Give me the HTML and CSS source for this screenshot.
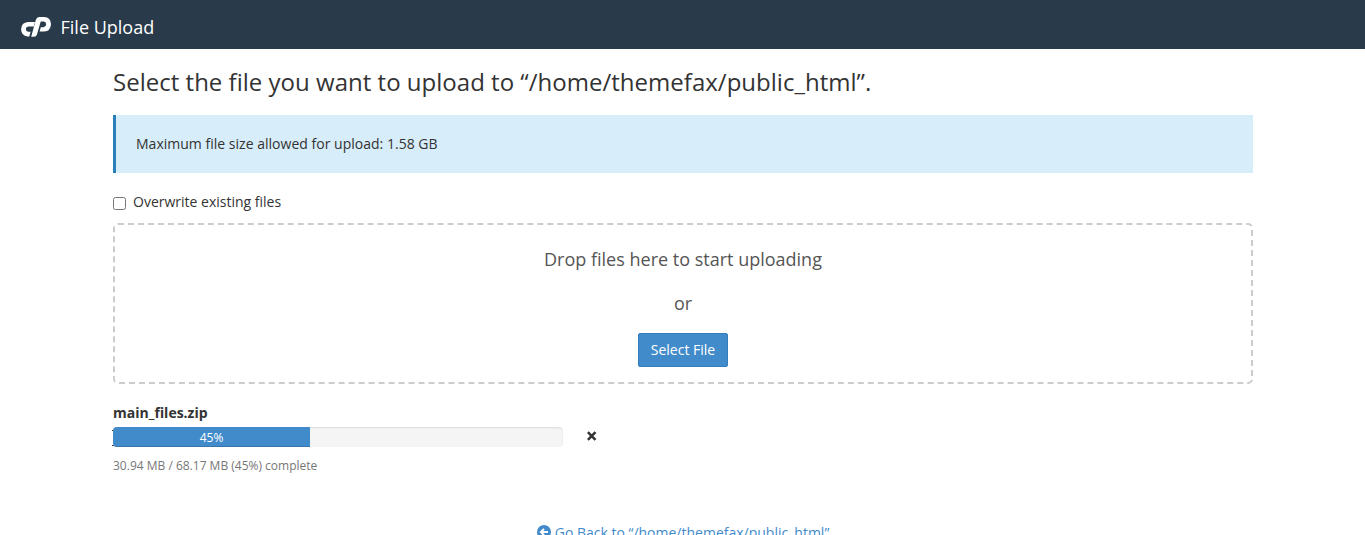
FILE: index.html
```
<!DOCTYPE html>
<html lang="en">
<head>
<meta charset="utf-8">
<title>File Upload</title>
<link rel="stylesheet" href="styles.css">
</head>
<body>
<header class="topbar">
  <svg class="logo" viewBox="0 0 30 20" width="30" height="20" aria-hidden="true">
    <path d="M7 5H14L12.8 9.4H7.4Q5 9.6 4.8 12Q5 14.6 7.2 14.8H9.6L8.3 19.5H6.6Q.3 19 .1 12.3Q.3 5.6 7 5Z"/>
    <path d="M14.8 3Q15.6 .2 18.4 0H23.2Q29.8.4 30 7.2Q29.6 14 23.2 14.6H18.6L19.8 10.2H22.6Q25 10 25.2 7.3Q25 4.7 22.7 4.5H19.7L16 17.4Q15.4 19.8 12.8 19.8H10.2Z"/>
  </svg>
  <span class="app-name">File Upload</span>
</header>
<main class="content">
  <h1 class="title">Select the file you want to upload to “/home/themefax/public_html”.</h1>
  <div class="notice">Maximum file size allowed for upload: 1.58 GB</div>
  <label class="overwrite"><input class="overwrite-box" type="checkbox"><span>Overwrite existing files</span></label>
  <section class="dropzone">
    <p class="drop-text">Drop files here to start uploading</p>
    <p class="drop-text">or</p>
    <button class="select-button" type="button">Select File</button>
  </section>
  <section class="upload">
    <div class="file-name">main_files.zip</div>
    <div class="upload-row">
      <div class="progress"><div class="progress-bar" style="width:43.8%">45%</div></div>
      <svg class="cancel" viewBox="0 0 10 10" width="10" height="10" aria-label="Cancel"><path d="M.9 1.2L8.5 8.8M8.5 1.2L.9 8.8"/></svg>
    </div>
    <div class="status">30.94 MB / 68.17 MB (45%) complete</div>
  </section>
  <a class="back" href="#">
    <svg class="back-icon" viewBox="0 0 14 14" width="14" height="14" aria-hidden="true"><circle cx="7" cy="7" r="7"/><path d="M11 7H4.2M7 3.8L3.8 7L7 10.2"/></svg>
    <span>Go Back to “/home/themefax/public_html”</span>
  </a>
</main>
</body>
</html>
```
FILE: styles.css
```
* { box-sizing: border-box; }
html, body { height: 100%; }
body {
  margin: 0;
  overflow: hidden;
  background: #fff;
  color: #333;
  font: 14px/20px "Open Sans", sans-serif;
}
.topbar {
  display: flex;
  align-items: flex-start;
  height: 49px;
  padding: 17px 0 0 21px;
  background: #293a4a;
}
.logo { fill: #fff; }
.app-name { margin: -2px 0 0 9.5px; color: #fff; font-size: 18px; line-height: 25px; }
.content { width: 1140px; margin-left: 113px; padding-top: 20px; }
.title { margin: 0; font-size: 24px; font-weight: 400; line-height: 26px; letter-spacing: .015px; white-space: nowrap; }
.notice {
  height: 58px;
  margin-top: 20px;
  padding: 19px 20px;
  border-left: 3px solid #2980b9;
  background: #d7edf9;
  letter-spacing: .015px;
}
.overwrite { display: flex; height: 20px; margin-top: 19px; }
.overwrite-box { width: 13px; height: 13px; margin: 5px 7px 0 0; }
.dropzone {
  height: 161px;
  margin-top: 11px;
  padding-top: 21px;
  border: 2px dashed #ccc;
  border-radius: 5px;
  text-align: center;
}
.drop-text { margin: 0 0 18px; color: #555; font-size: 18px; line-height: 26px; }
.select-button {
  display: block;
  width: 90px;
  height: 34px;
  margin: -1px auto 0;
  padding: 0;
  border: 1px solid #357ebd;
  border-radius: 2px;
  background: #428bca;
  color: #fff;
  font: inherit;
}
.upload { margin-top: 19px; }
.file-name { font-weight: 700; }
.upload-row { position: relative; display: flex; align-items: flex-start; margin-top: 4px; }
/* bracket ends showing from under the bar's left edge */
.upload-row::before {
  content: "";
  position: absolute;
  left: -1px;
  top: 3px;
  width: 2px;
  height: 14px;
  border: solid #333;
  border-width: 1px 0;
}
.progress {
  position: relative;
  width: 450px;
  height: 20px;
  overflow: hidden;
  border-radius: 4px;
  background: #f5f5f5;
  box-shadow: inset 0 1px 2px rgba(0, 0, 0, .1);
}
.progress-bar {
  height: 20px;
  padding-top: 1px;
  background: #428bca;
  box-shadow: inset 0 -1px 0 rgba(0, 0, 0, .15);
  color: #fff;
  font-size: 12px;
  text-align: center;
}
.cancel { margin: 4px 0 0 24px; fill: none; stroke: #333; stroke-width: 2.5; }
.status { margin-top: 9px; color: #777; font-size: 12px; }
.back {
  display: flex;
  justify-content: center;
  gap: 4px;
  margin-top: 47px;
  color: #428bca;
  text-decoration: none;
}
.back-icon { margin-top: 2px; fill: #428bca; }
.back-icon path { fill: none; stroke: #fff; stroke-width: 1.9; }
```
